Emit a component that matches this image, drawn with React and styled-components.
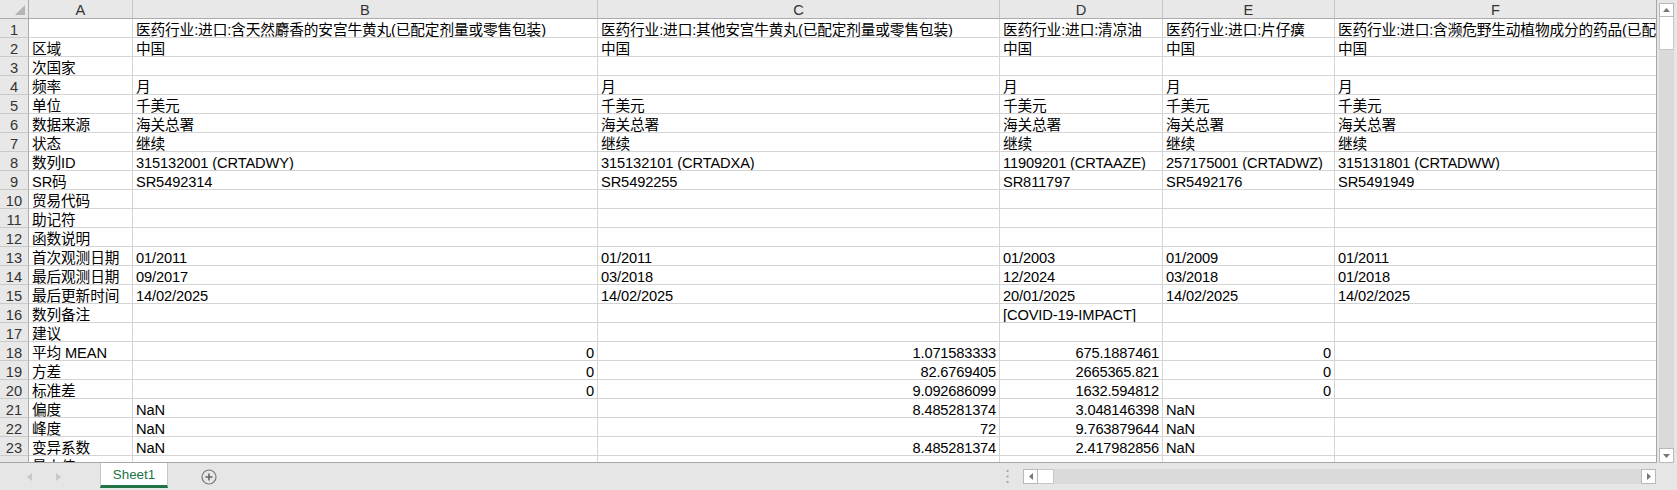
import React from 'react'
import styled, { createGlobalStyle } from 'styled-components'

const GlobalStyle = createGlobalStyle`
  html, body {
    margin: 0;
    padding: 0;
    background: #e6e6e6;
  }
  body {
    font-family: 'Liberation Sans', 'Noto Sans CJK SC', sans-serif;
  }
`

const COLUMNS = [
  { name: 'A', width: 104 },
  { name: 'B', width: 465 },
  { name: 'C', width: 402 },
  { name: 'D', width: 163 },
  { name: 'E', width: 172 },
  { name: 'F', width: 322 }
]

const TEMPLATE = `29px ${COLUMNS.map(c => c.width + 'px').join(' ')}`

const ROWS = [
  ['', '医药行业:进口:含天然麝香的安宫牛黄丸(已配定剂量或零售包装)', '医药行业:进口:其他安宫牛黄丸(已配定剂量或零售包装)', '医药行业:进口:清凉油', '医药行业:进口:片仔癀', '医药行业:进口:含濒危野生动植物成分的药品(已配定剂量或零售包装)'],
  ['区域', '中国', '中国', '中国', '中国', '中国'],
  ['次国家', '', '', '', '', ''],
  ['频率', '月', '月', '月', '月', '月'],
  ['单位', '千美元', '千美元', '千美元', '千美元', '千美元'],
  ['数据来源', '海关总署', '海关总署', '海关总署', '海关总署', '海关总署'],
  ['状态', '继续', '继续', '继续', '继续', '继续'],
  ['数列ID', '315132001 (CRTADWY)', '315132101 (CRTADXA)', '11909201 (CRTAAZE)', '257175001 (CRTADWZ)', '315131801 (CRTADWW)'],
  ['SR码', 'SR5492314', 'SR5492255', 'SR811797', 'SR5492176', 'SR5491949'],
  ['贸易代码', '', '', '', '', ''],
  ['助记符', '', '', '', '', ''],
  ['函数说明', '', '', '', '', ''],
  ['首次观测日期', '01/2011', '01/2011', '01/2003', '01/2009', '01/2011'],
  ['最后观测日期', '09/2017', '03/2018', '12/2024', '03/2018', '01/2018'],
  ['最后更新时间', '14/02/2025', '14/02/2025', '20/01/2025', '14/02/2025', '14/02/2025'],
  ['数列备注', '', '', '[COVID-19-IMPACT]', '', ''],
  ['建议', '', '', '', '', ''],
  ['平均 MEAN', 0, 1.071583333, 675.1887461, 0, ''],
  ['方差', 0, 82.6769405, 2665365.821, 0, ''],
  ['标准差', 0, 9.092686099, 1632.594812, 0, ''],
  ['偏度', 'NaN', 8.485281374, 3.048146398, 'NaN', ''],
  ['峰度', 'NaN', 72, 9.763879644, 'NaN', ''],
  ['变异系数', 'NaN', 8.485281374, 2.417982856, 'NaN', ''],
  ['最大值', 0, 25.7178, 9600.4412, 0, '']
]

export default function App () {
  return (
    <Window>
      <GlobalStyle />
      <Main>
        <Sheet>
          <HeaderRow>
            <Corner>
              <svg width="29" height="18" viewBox="0 0 29 18">
                <polygon points="25,5 25,15 15,15" fill="#b4b4b4" />
              </svg>
            </Corner>
            {COLUMNS.map(c => <ColHead key={c.name}>{c.name}</ColHead>)}
          </HeaderRow>
          {ROWS.map((row, i) => (
            <Row key={i}>
              <RowHead>{i + 1}</RowHead>
              {row.map((v, j) => (
                <Cell key={j} $num={typeof v === 'number'}>{String(v)}</Cell>
              ))}
            </Row>
          ))}
        </Sheet>
        <VScroll>
          <VTrack>
            <ArrowBox $h={14}>
              <svg width="7" height="4" viewBox="0 0 7 4"><polygon points="0,4 7,4 3.5,0" fill="#777" /></svg>
            </ArrowBox>
            <VThumb />
            <Spacer />
            <ArrowBox $h={15}>
              <svg width="7" height="4" viewBox="0 0 7 4"><polygon points="0,0 7,0 3.5,4" fill="#777" /></svg>
            </ArrowBox>
          </VTrack>
        </VScroll>
      </Main>
      <BottomBar>
        <TabNav>
          <svg width="5" height="8" viewBox="0 0 5 8"><polygon points="5,0 5,8 0,4" fill="#c8c8c8" /></svg>
          <svg width="5" height="8" viewBox="0 0 5 8"><polygon points="0,0 0,8 5,4" fill="#c8c8c8" /></svg>
        </TabNav>
        <SheetTab>Sheet1</SheetTab>
        <AddSheet>
          <svg width="16" height="16" viewBox="0 0 16 16">
            <circle cx="8" cy="8" r="7" fill="none" stroke="#777" strokeWidth="1.2" />
            <path d="M8 4.5v7M4.5 8h7" stroke="#666" strokeWidth="1.6" />
          </svg>
        </AddSheet>
        <Spacer />
        <Splitter>
          <svg width="3" height="13" viewBox="0 0 3 13">
            <rect x="0.5" y="0" width="2" height="2" fill="#a8a8a8" />
            <rect x="0.5" y="5.5" width="2" height="2" fill="#a8a8a8" />
            <rect x="0.5" y="11" width="2" height="2" fill="#a8a8a8" />
          </svg>
        </Splitter>
        <HScroll>
          <ArrowBox $w={15}>
            <svg width="4" height="7" viewBox="0 0 4 7"><polygon points="4,0 4,7 0,3.5" fill="#777" /></svg>
          </ArrowBox>
          <HThumb />
          <HTrack />
          <ArrowBox $w={15}>
            <svg width="4" height="7" viewBox="0 0 4 7"><polygon points="0,0 0,7 4,3.5" fill="#777" /></svg>
          </ArrowBox>
        </HScroll>
        <CornerGap />
      </BottomBar>
    </Window>
  )
}

const Window = styled.div`
  display: flex;
  flex-direction: column;
  width: 1677px;
  height: 490px;
  overflow: hidden;
  background: #e6e6e6;
`

const Main = styled.div`
  display: flex;
  height: 463px;
`

const Sheet = styled.div`
  box-sizing: border-box;
  width: 1657px;
  height: 463px;
  overflow: hidden;
  background: #fff;
  border-right: 1px solid #a6a6a6;
  border-bottom: 1px solid #a6a6a6;
`

const HeaderRow = styled.div`
  display: grid;
  grid-template-columns: ${TEMPLATE};
  height: 19px;
  background: #e8e8e8;
`

const Corner = styled.div`
  box-sizing: border-box;
  border-right: 1px solid #ababab;
  border-bottom: 1px solid #ababab;
  height: 19px;
  svg { display: block; }
`

const ColHead = styled.div`
  box-sizing: border-box;
  height: 19px;
  padding-top: 1px;
  line-height: 18px;
  font-size: 14.67px;
  color: #333;
  text-align: center;
  border-right: 1px solid #c6c6c6;
  border-bottom: 1px solid #ababab;
  overflow: hidden;
`

const Row = styled.div`
  display: grid;
  grid-template-columns: ${TEMPLATE};
  height: 19px;
`

const RowHead = styled.div`
  box-sizing: border-box;
  height: 19px;
  padding-top: 2px;
  line-height: 18px;
  font-size: 14.67px;
  color: #333;
  text-align: center;
  background: #e8e8e8;
  border-right: 1px solid #ababab;
  border-bottom: 1px solid #cacaca;
  overflow: hidden;
`

const Cell = styled.div`
  box-sizing: border-box;
  height: 19px;
  padding: 2px 3px 0;
  line-height: 18px;
  font-size: 14.67px;
  color: #000;
  white-space: nowrap;
  overflow: hidden;
  text-align: ${p => (p.$num ? 'right' : 'left')};
  letter-spacing: ${p => (p.$num ? '-0.2px' : '-0.12px')};
  border-right: 1px solid #d4d4d4;
  border-bottom: 1px solid #d4d4d4;
`

const VScroll = styled.div`
  box-sizing: border-box;
  width: 20px;
  height: 463px;
  padding: 3px 3px 0 2px;
`

const VTrack = styled.div`
  display: flex;
  flex-direction: column;
  height: 100%;
  background: #dadada;
`

const ArrowBox = styled.div`
  box-sizing: border-box;
  display: flex;
  align-items: center;
  justify-content: center;
  width: ${p => (p.$w ? p.$w + 'px' : '15px')};
  height: ${p => (p.$h ? p.$h + 'px' : '15px')};
  flex: none;
  background: #fff;
  border: 1px solid #b9b9b9;
  svg { display: block; }
`

const VThumb = styled.div`
  box-sizing: border-box;
  height: 33px;
  background: #fff;
  border: 1px solid #c6c6c6;
  border-top: none;
`

const Spacer = styled.div`
  flex: 1;
`

const BottomBar = styled.div`
  display: flex;
  align-items: flex-start;
  height: 27px;
`

const TabNav = styled.div`
  display: flex;
  align-items: center;
  gap: 24px;
  width: 100px;
  height: 27px;
  padding-left: 27px;
  box-sizing: border-box;
  svg { display: block; }
`

const SheetTab = styled.div`
  box-sizing: border-box;
  width: 68px;
  height: 25px;
  padding-top: 3px;
  background: #fff;
  border-left: 1px solid #c6c6c6;
  border-right: 1px solid #c6c6c6;
  border-bottom: 3px solid #217346;
  color: #217346;
  font-size: 13.4px;
  line-height: 17px;
  text-align: center;
`

const AddSheet = styled.div`
  display: flex;
  align-items: center;
  height: 27px;
  margin-left: 33px;
  svg { display: block; }
`

const Splitter = styled.div`
  display: flex;
  align-items: center;
  justify-content: center;
  width: 12px;
  height: 27px;
  margin-right: 10px;
  svg { display: block; }
`

const HScroll = styled.div`
  display: flex;
  width: 633px;
  height: 15px;
  margin-top: 6px;
`

const HThumb = styled.div`
  box-sizing: border-box;
  width: 16px;
  height: 15px;
  background: #fff;
  border: 1px solid #c6c6c6;
  border-left: none;
`

const HTrack = styled.div`
  flex: 1;
  height: 15px;
  background: #dadada;
`

const CornerGap = styled.div`
  width: 21px;
`
